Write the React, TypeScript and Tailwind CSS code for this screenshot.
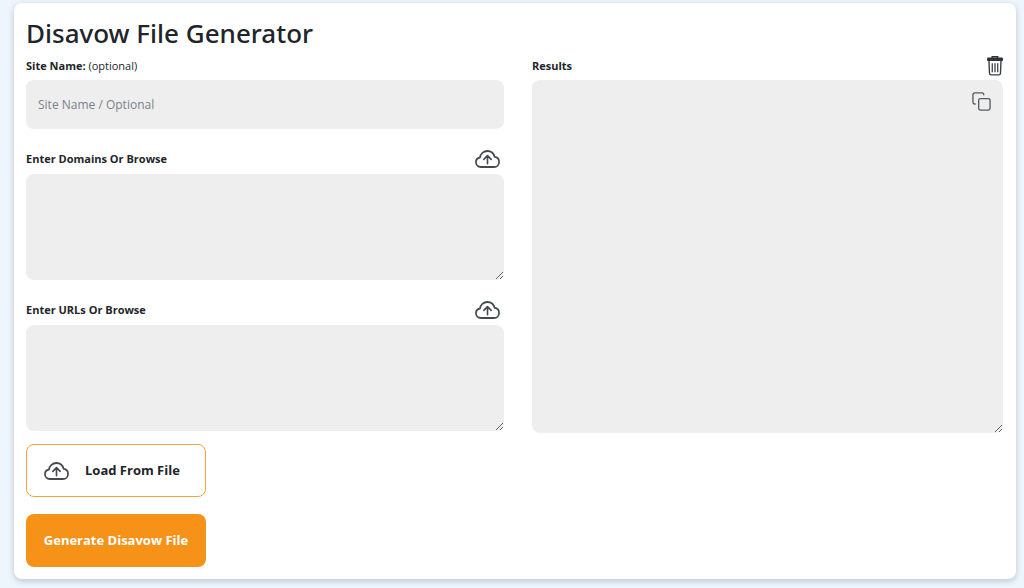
import React, { useState } from "react";

function CloudUploadIcon() {
  return (
    <svg
      width="25"
      height="18"
      viewBox="0 0 26 18"
      preserveAspectRatio="none"
      fill="none"
      stroke="#454a50"
      strokeLinecap="round"
      strokeLinejoin="round"
      aria-hidden="true"
    >
      <path
        strokeWidth="1.8"
        d="M6 17 C3.1 17 1 15 1 12.3 C1 9.8 2.7 7.9 5.2 7.5 C5.7 3.8 8.9 1 12.8 1 C16.5 1 19.5 3.3 20.4 6.9 C23.2 7.2 25 9.3 25 11.9 C25 14.8 22.8 17 19.8 17 Z"
      />
      <path strokeWidth="1.7" d="M13 13.6 V6 M9.2 9.4 L13 5.6 L16.8 9.4" />
    </svg>
  );
}

function TrashIcon() {
  return (
    <svg width="16" height="20" viewBox="0 0 16 20" fill="none" aria-hidden="true">
      <path d="M5.2 2 V0.8 H10.8 V2" stroke="#2f343a" strokeWidth="1.4" />
      <rect x="0" y="1.6" width="16" height="3.4" rx="1" fill="#2f343a" />
      <path
        d="M2 5 L2.5 17.2 Q2.6 18.9 4.2 18.9 H11.8 Q13.4 18.9 13.5 17.2 L14 5"
        stroke="#3a3f45"
        strokeWidth="1.4"
      />
      <path d="M5.3 7.2 V16.2 M8 7.2 V16.2 M10.7 7.2 V16.2" stroke="#4a4f55" strokeWidth="1.4" />
    </svg>
  );
}

function CopyIcon() {
  return (
    <svg
      width="19"
      height="19"
      viewBox="0 0 20 20"
      fill="none"
      stroke="#555a60"
      strokeWidth="1.4"
      strokeLinecap="round"
      aria-hidden="true"
    >
      <path d="M3.4 12.6 H3 Q1 12.6 1 10.6 V3 Q1 1 3 1 H10.6 Q12.4 1 12.4 3" />
      <rect x="7" y="7" width="12" height="12" rx="1.8" />
    </svg>
  );
}

const labelText = "text-[11px] leading-5 font-bold text-[#212529]";
const field = "block w-full rounded-lg bg-[#eeeeee] px-3 text-[12px] text-[#212529] outline-none";

type ListFieldProps = {
  id: string;
  label: string;
  value: string;
  onChange: (value: string) => void;
};

function ListField({ id, label, value, onChange }: ListFieldProps) {
  return (
    <div>
      <div className="flex h-[31px] items-center justify-between pr-1">
        <label htmlFor={id} className={labelText}>
          {label}
        </label>
        <button type="button" aria-label={label}>
          <CloudUploadIcon />
        </button>
      </div>
      <textarea
        id={id}
        value={value}
        onChange={(e) => onChange(e.target.value)}
        className={`${field} h-[106px] resize py-3`}
      />
    </div>
  );
}

export default function App() {
  const [site, setSite] = useState("");
  const [domains, setDomains] = useState("");
  const [urls, setUrls] = useState("");
  const [results, setResults] = useState("");

  const generate = () => {
    const lines = (text: string) =>
      text
        .split("\n")
        .map((line) => line.trim())
        .filter(Boolean);
    setResults(
      [
        ...(site ? [`# ${site}`] : []),
        ...lines(domains).map((domain) => `domain:${domain}`),
        ...lines(urls),
      ].join("\n")
    );
  };

  return (
    <div className="min-h-screen bg-[#edf5fd] pt-[3px] pr-2 pb-2 pl-[14px] font-['Open_Sans','Noto_Sans',sans-serif]">
      <main className="rounded-lg bg-white px-3 py-3 shadow-[0_2px_6px_rgba(0,0,0,0.2)]">
        <h1 className="font-['Noto_Sans','Open_Sans',sans-serif] text-[26px] leading-9 font-medium text-[#212529]">
          Disavow File Generator
        </h1>
        <div className="grid grid-cols-[478fr_471fr] items-start gap-x-7 pr-px">
          <div>
            <div className="flex h-[29px] items-center">
              <label htmlFor="site" className={labelText}>
                Site Name: <span className="font-normal">(optional)</span>
              </label>
            </div>
            <input
              id="site"
              type="text"
              placeholder="Site Name / Optional"
              value={site}
              onChange={(e) => setSite(e.target.value)}
              className={`${field} h-[49px] placeholder:text-[#7b838a]`}
            />
            <div className="mt-[14px] flex flex-col gap-[14px]">
              <ListField
                id="domains"
                label="Enter Domains Or Browse"
                value={domains}
                onChange={setDomains}
              />
              <ListField id="urls" label="Enter URLs Or Browse" value={urls} onChange={setUrls} />
            </div>
            <div className="mt-[13px] flex w-[180px] flex-col gap-[17px]">
              <button
                type="button"
                className="flex h-[53px] items-center gap-4 rounded-lg border border-[#f8a23a] px-[17px] text-[13px] font-bold text-[#212529]"
              >
                <CloudUploadIcon />
                Load From File
              </button>
              <button
                type="button"
                onClick={generate}
                className="h-[53px] rounded-lg bg-[#f69218] text-[13px] font-bold whitespace-nowrap text-white"
              >
                Generate Disavow File
              </button>
            </div>
          </div>
          <div>
            <div className="flex h-[29px] items-center justify-between">
              <label htmlFor="results" className={labelText}>
                Results
              </label>
              <button type="button" aria-label="Clear" onClick={() => setResults("")}>
                <TrashIcon />
              </button>
            </div>
            <div className="relative">
              <textarea
                id="results"
                value={results}
                onChange={(e) => setResults(e.target.value)}
                className={`${field} h-[353px] resize py-3`}
              />
              <button
                type="button"
                aria-label="Copy"
                onClick={() => navigator.clipboard?.writeText(results)}
                className="absolute top-3 right-3"
              >
                <CopyIcon />
              </button>
            </div>
          </div>
        </div>
      </main>
    </div>
  );
}
